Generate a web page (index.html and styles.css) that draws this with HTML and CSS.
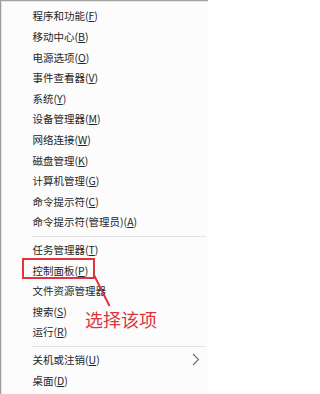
FILE: index.html
```html
<!DOCTYPE html>
<html lang="zh-CN">
<head>
<meta charset="utf-8">
<title>Win+X 菜单</title>
<link rel="stylesheet" href="styles.css">
</head>
<body>
<div class="menu">
  <div class="group">
    <div class="item">程序和功能(<u>F</u>)</div>
    <div class="item">移动中心(<u>B</u>)</div>
    <div class="item">电源选项(<u>O</u>)</div>
    <div class="item">事件查看器(<u>V</u>)</div>
    <div class="item">系统(<u>Y</u>)</div>
    <div class="item">设备管理器(<u>M</u>)</div>
    <div class="item">网络连接(<u>W</u>)</div>
    <div class="item">磁盘管理(<u>K</u>)</div>
    <div class="item">计算机管理(<u>G</u>)</div>
    <div class="item">命令提示符(<u>C</u>)</div>
    <div class="item">命令提示符(管理员)(<u>A</u>)</div>
  </div>
  <div class="sep"></div>
  <div class="group">
    <div class="item">任务管理器(<u>T</u>)</div>
    <div class="item">控制面板(<u>P</u>)</div>
    <div class="item">文件资源管理器</div>
    <div class="item">搜索(<u>S</u>)</div>
    <div class="item">运行(<u>R</u>)</div>
  </div>
  <div class="sep"></div>
  <div class="group">
    <div class="item has-sub">关机或注销(<u>U</u>)
      <svg class="chev" width="8" height="13" viewBox="0 0 8 13"><polyline points="1,1 6.5,6.5 1,12" fill="none" stroke="#6e6e6e" stroke-width="1.1"/></svg>
    </div>
    <div class="item">桌面(<u>D</u>)</div>
  </div>

  <div class="hl-box"></div>
  <svg class="hl-line" width="208" height="394" viewBox="0 0 208 394"><line x1="94" y1="275" x2="109.5" y2="306" stroke="#e0333c" stroke-width="2"/></svg>
  <div class="hl-text">选择该项</div>
</div>
</body>
</html>
```
FILE: styles.css
```css
html, body {
  margin: 0;
  padding: 0;
  background: #ffffff;
}
.menu {
  position: relative;
  box-sizing: border-box;
  width: 208px;
  height: 394px;
  background: #fcfcfc;
  border-top: 1px solid #a3a3a3;
  border-left: 1px solid #9c9c9c;
  box-shadow: inset 1px 1px 0 #e4e4e4;
  padding-top: 4.7px;
  font-family: "Noto Sans CJK SC", "Noto Sans", sans-serif;
  font-size: 10.5px;
  color: #262626;
  overflow: hidden;
}
.group {
  display: flex;
  flex-direction: column;
}
.item {
  height: 20.6px;
  display: flex;
  align-items: center;
  padding-left: 31.5px;
  white-space: nowrap;
}
.item u {
  text-decoration-thickness: 1px;
  text-underline-offset: 1px;
}
.has-sub {
  position: relative;
}
.chev {
  position: absolute;
  left: 191px;
  top: 4px;
}
.sep {
  height: 1px;
  margin: 4px 2px 2px 31px;
  background: #e3e3e3;
}
.hl-box {
  position: absolute;
  left: 20.5px;
  top: 257px;
  width: 73px;
  height: 21px;
  box-sizing: border-box;
  border: 2px solid #e3333b;
}
.hl-line {
  position: absolute;
  left: -1px;
  top: -1px;
}
.hl-text {
  position: absolute;
  left: 84px;
  top: 308px;
  font-size: 18px;
  line-height: 20px;
  color: #dc3540;
  white-space: nowrap;
}
```
